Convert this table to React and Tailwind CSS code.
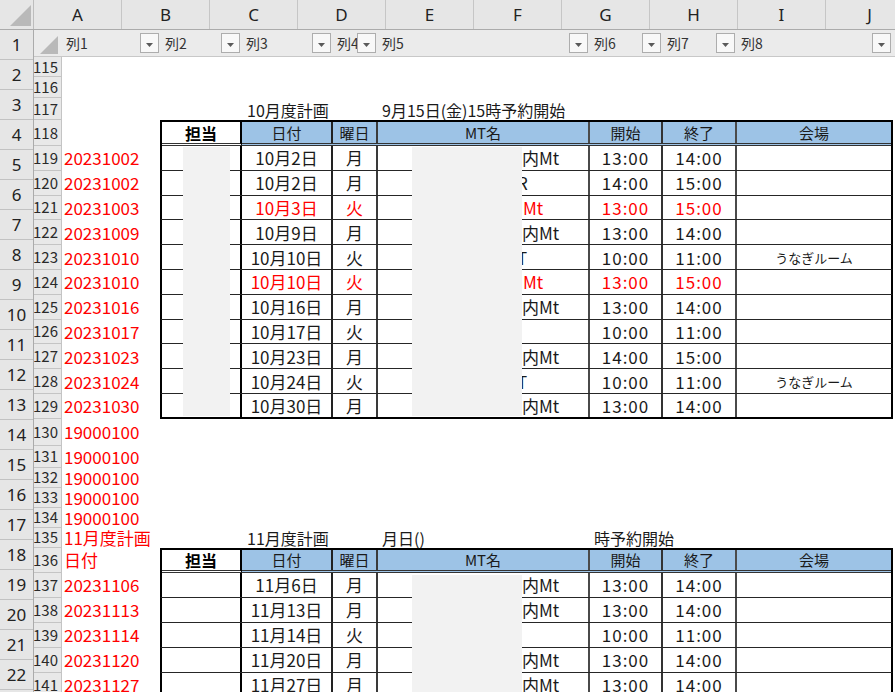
import React from "react";

const RED = "text-[#ff0000]";
const BLK = "text-[#1a1a1a]";

const colLetters = ["A", "B", "C", "D", "E", "F", "G", "H", "I", "J"];

function Tri({ w, h, pts }) {
  return (
    <svg width={w} height={h} className="block">
      <polygon points={pts} fill="#b9b9b9" />
    </svg>
  );
}

function DropBtn() {
  return (
    <div className="w-[19px] h-[20px] shrink-0 border border-[#adadad] bg-[#f8f8f8] flex items-center justify-center">
      <svg width="7" height="4" className="block mt-[3px]">
        <polygon points="0,0 7,0 3.5,4" fill="#5a5a5a" />
      </svg>
    </div>
  );
}

const filterCols = [
  { t: "列1", w: "w-[99px]" },
  { t: "列2", w: "w-[81px]" },
  { t: "列3", w: "w-[91px]" },
  { t: "列4", w: "w-[45px]" },
  { t: "列5", w: "w-[212px]" },
  { t: "列6", w: "w-[73px]" },
  { t: "列7", w: "w-[74px]" },
  { t: "列8", w: "w-[156px]" },
];

const t1 = [
  { a: "20231002", d: "10月2日", w: "月", m: "内Mt", pl: "pl-[144px]", s: "13:00", e: "14:00", v: "" },
  { a: "20231002", d: "10月2日", w: "月", m: "R", pl: "pl-[139px]", s: "14:00", e: "15:00", v: "" },
  { a: "20231003", d: "10月3日", w: "火", m: "Mt", pl: "pl-[145px]", s: "13:00", e: "15:00", v: "", red: true },
  { a: "20231009", d: "10月9日", w: "月", m: "内Mt", pl: "pl-[144px]", s: "13:00", e: "14:00", v: "" },
  { a: "20231010", d: "10月10日", w: "火", m: "T", pl: "pl-[139px]", s: "10:00", e: "11:00", v: "うなぎルーム" },
  { a: "20231010", d: "10月10日", w: "火", m: "Mt", pl: "pl-[145px]", s: "13:00", e: "15:00", v: "", red: true },
  { a: "20231016", d: "10月16日", w: "月", m: "内Mt", pl: "pl-[144px]", s: "13:00", e: "14:00", v: "" },
  { a: "20231017", d: "10月17日", w: "火", m: "", pl: "pl-[144px]", s: "10:00", e: "11:00", v: "" },
  { a: "20231023", d: "10月23日", w: "月", m: "内Mt", pl: "pl-[144px]", s: "14:00", e: "15:00", v: "" },
  { a: "20231024", d: "10月24日", w: "火", m: "T", pl: "pl-[139px]", s: "10:00", e: "11:00", v: "うなぎルーム" },
  { a: "20231030", d: "10月30日", w: "月", m: "内Mt", pl: "pl-[144px]", s: "13:00", e: "14:00", v: "" },
];

const t2 = [
  { a: "20231106", d: "11月6日", w: "月", m: "内Mt", pl: "pl-[144px]", s: "13:00", e: "14:00", v: "" },
  { a: "20231113", d: "11月13日", w: "月", m: "内Mt", pl: "pl-[144px]", s: "13:00", e: "14:00", v: "" },
  { a: "20231114", d: "11月14日", w: "火", m: "", pl: "pl-[144px]", s: "10:00", e: "11:00", v: "" },
  { a: "20231120", d: "11月20日", w: "月", m: "内Mt", pl: "pl-[144px]", s: "13:00", e: "14:00", v: "" },
  { a: "20231127", d: "11月27日", w: "月", m: "内Mt", pl: "pl-[144px]", s: "13:00", e: "14:00", v: "" },
];

function Row({ h, n, a, children }) {
  return (
    <div className={`flex shrink-0 ${h}`}>
      <div className="w-[28px] shrink-0 h-full bg-[#e8e8e8] border-b border-r border-[#c4c4c4] flex items-center justify-end overflow-hidden pr-[3px]">
        <span className="text-[15px] leading-[18px] text-[#2a2a2a] whitespace-nowrap">{n}</span>
      </div>
      <div className="w-[98px] shrink-0 h-full flex items-center pl-[2px] overflow-hidden">
        <span className={`text-[17px] leading-[20px] whitespace-nowrap ${RED}`}>{a}</span>
      </div>
      <div className="w-[735px] shrink-0 h-full">{children}</div>
    </div>
  );
}

function HeaderRow() {
  return (
    <div className="flex h-full w-[733px] border-x-2 border-t-2 border-black">
      <div className="w-[80px] h-full border-r-2 border-black border-b-[3px] border-b-[#333] border-double bg-white flex items-center justify-center">
        <span className="text-[16px] font-bold leading-none text-black">担当</span>
      </div>
      <div className="flex flex-1 h-full bg-[#9dc3e6] border-b-[3px] border-double border-[#333]">
        <div className="w-[91px] h-full border-r-2 border-[#222] flex items-center justify-center text-[15px] leading-none text-[#1a1a1a]">日付</div>
        <div className="w-[45px] h-full border-r-2 border-[#3a3a3a] flex items-center justify-center text-[15px] leading-none text-[#1a1a1a]">曜日</div>
        <div className="w-[212px] h-full border-r-2 border-[#4a4a4a] flex items-center justify-center text-[15px] leading-none text-[#1a1a1a]">MT名</div>
        <div className="w-[73px] h-full border-r-2 border-[#333] flex items-center justify-center text-[15px] leading-none text-[#1a1a1a]">開始</div>
        <div className="w-[74px] h-full border-r-2 border-[#4a4a4a] flex items-center justify-center text-[15px] leading-none text-[#1a1a1a]">終了</div>
        <div className="flex-1 h-full flex items-center justify-center text-[15px] leading-none text-[#1a1a1a]">会場</div>
      </div>
    </div>
  );
}

function DataRow({ r, last }) {
  const c = r.red ? RED : BLK;
  return (
    <div
      className={`flex h-full w-[733px] border-x-2 border-black ${
        last ? "border-b-2" : "border-b border-b-[#262626]"
      }`}
    >
      <div className="w-[80px] h-full border-r-2 border-black" />
      <div className={`w-[91px] h-full border-r-2 border-[#222] flex items-center justify-center text-[17px] leading-none ${c}`}>{r.d}</div>
      <div className={`w-[45px] h-full border-r-2 border-[#3a3a3a] flex items-center justify-center text-[17px] leading-none ${c}`}>{r.w}</div>
      <div className={`w-[212px] h-full border-r-2 border-[#4a4a4a] flex items-center overflow-hidden whitespace-nowrap text-[17px] leading-none ${r.pl} ${c}`}>{r.m}</div>
      <div className={`w-[73px] h-full border-r-2 border-[#333] flex items-center justify-center text-[17px] tracking-[1px] leading-none ${c}`}>{r.s}</div>
      <div className={`w-[74px] h-full border-r-2 border-[#4a4a4a] flex items-center justify-center text-[17px] tracking-[1px] leading-none ${c}`}>{r.e}</div>
      <div className="flex-1 h-full flex items-center justify-center text-[13px] leading-none text-[#1a1a1a] whitespace-nowrap">{r.v}</div>
    </div>
  );
}

function TitleRow({ a, b, c }) {
  return (
    <div className="flex items-end h-full pb-[2px] text-[16px] leading-none text-[#1a1a1a] whitespace-nowrap">
      <div className="w-[218px] pl-[87px]">{a}</div>
      <div className="w-[212px] pl-[4px]">{b}</div>
      <div className="pl-[4px]">{c}</div>
    </div>
  );
}

export default function App() {
  return (
    <div className="w-[895px] h-[692px] overflow-hidden bg-white flex flex-col font-['Noto_Sans_CJK_JP','Noto_Sans',sans-serif]">
      {/* column header */}
      <div className="flex h-[30px] shrink-0 bg-[#e6e6e6] border-b border-[#ababab]">
        <div className="w-[34px] shrink-0 h-full border-r border-[#bdbdbd]">
          <Tri w={34} h={29} pts="31,5 31,26 10,26" />
        </div>
        {colLetters.map((l) => (
          <div key={l} className="w-[88px] shrink-0 h-full border-r border-[#c6c6c6] flex items-center justify-center text-[17px] leading-none text-[#222] font-['Noto_Sans',sans-serif]">
            {l}
          </div>
        ))}
      </div>

      <div className="flex flex-1 min-h-0">
        {/* outer row header */}
        <div className="w-[34px] shrink-0 flex flex-col bg-[#e6e6e6] border-r border-[#ababab] overflow-hidden">
          {Array.from({ length: 22 }, (_, i) => i + 1).map((n) => (
            <div key={n} className="h-[30px] shrink-0 border-b border-[#c2c2c2] flex items-center justify-center text-[17px] leading-none text-[#222] font-['Noto_Sans',sans-serif]">
              {n}
            </div>
          ))}
        </div>

        <div className="w-[861px] shrink-0 flex flex-col overflow-hidden">
          {/* filter row */}
          <div className="flex h-[27px] shrink-0 bg-[#ebebeb] border-b border-[#c8c8c8]">
            <div className="w-[28px] shrink-0 h-full">
              <Tri w={28} h={26} pts="24,6 24,24 6,24" />
            </div>
            {filterCols.map((f) => (
              <div key={f.t} className={`${f.w} shrink-0 h-full flex items-center pl-[4px] pr-[2px]`}>
                <span className="flex-1 min-w-0 overflow-hidden whitespace-nowrap text-[14px] leading-[18px] text-[#333]">{f.t}</span>
                <DropBtn />
              </div>
            ))}
          </div>

          {/* inner sheet */}
          <div className="relative flex flex-col">
            <Row h="h-[20px]" n="115" />
            <Row h="h-[21px]" n="116" />
            <Row h="h-[22px]" n="117">
              <TitleRow a="10月度計画" b="9月15日(金)15時予約開始" c="" />
            </Row>
            <Row h="h-[26px]" n="118">
              <HeaderRow />
            </Row>
            {t1.map((r, i) => (
              <Row key={i} h="h-[24.8px]" n={String(119 + i)} a={r.a}>
                <DataRow r={r} last={i === t1.length - 1} />
              </Row>
            ))}
            <Row h="h-[27px]" n="130" a="19000100" />
            <Row h="h-[22px]" n="131" a="19000100" />
            <Row h="h-[20px]" n="132" a="19000100" />
            <Row h="h-[20px]" n="133" a="19000100" />
            <Row h="h-[20px]" n="134" a="19000100" />
            <Row h="h-[20px]" n="135" a="11月度計画">
              <TitleRow a="11月度計画" b="月日()" c="時予約開始" />
            </Row>
            <Row h="h-[25px]" n="136" a="日付">
              <HeaderRow />
            </Row>
            {t2.map((r, i) => (
              <Row key={i} h="h-[25px]" n={String(137 + i)} a={r.a}>
                <DataRow r={r} last={false} />
              </Row>
            ))}

            {/* redaction overlays */}
            <div className="absolute left-[149px] top-[90px] w-[47px] h-[269px] bg-[#f2f2f2]" />
            <div className="absolute left-[378px] top-[90px] w-[110px] h-[269px] bg-[#f2f2f2]" />
            <div className="absolute left-[378px] top-[518px] w-[110px] h-[200px] bg-[#f2f2f2]" />
          </div>
        </div>
      </div>
    </div>
  );
}
